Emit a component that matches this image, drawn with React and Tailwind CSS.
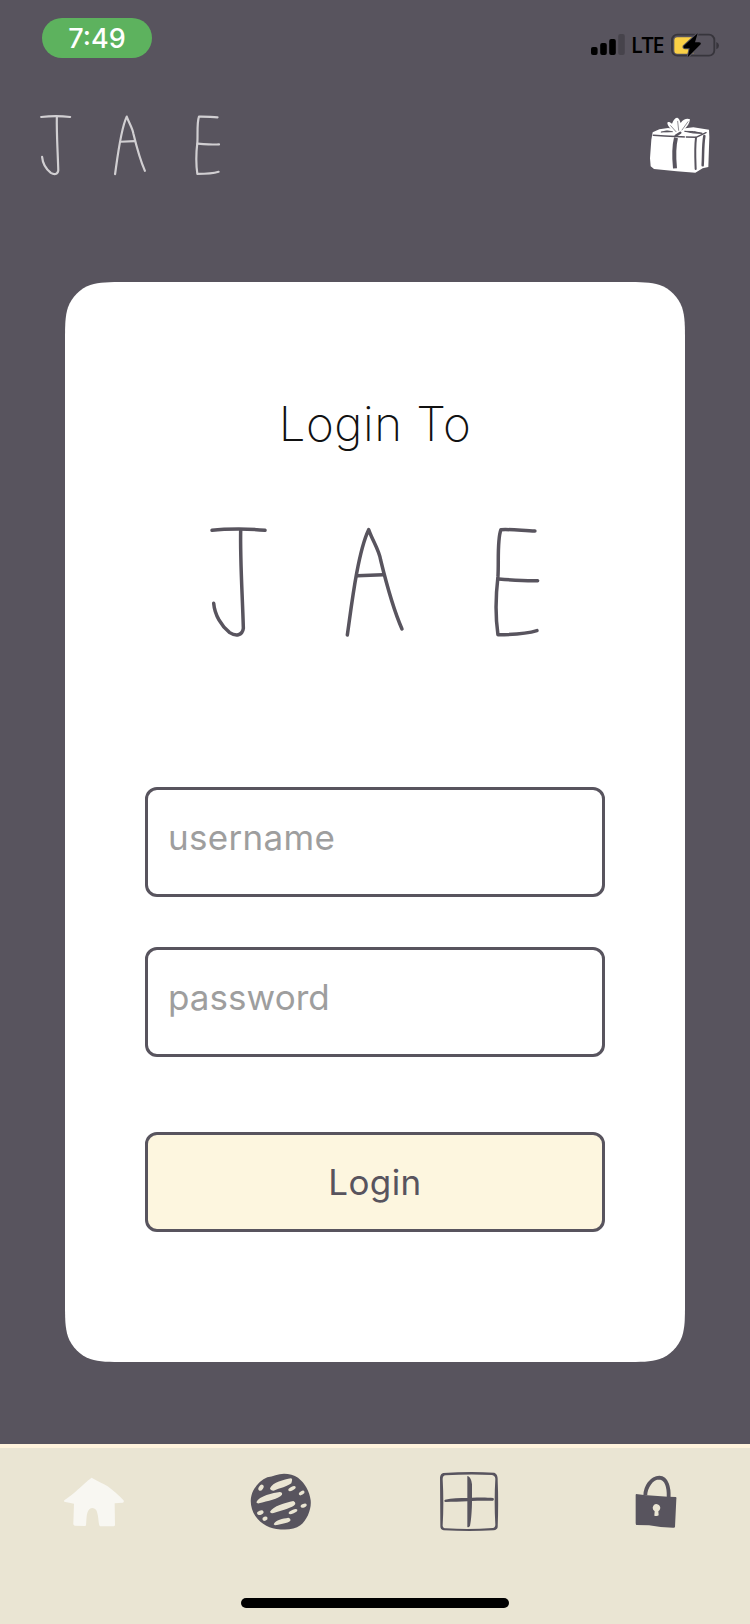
function Wordmark({ className, strokeWidth }) {
  return (
    <svg role="img" aria-label="JAE" viewBox="55 435 1000 340" className={className} fill="none" stroke="currentColor" strokeWidth={strokeWidth} strokeLinecap="round" strokeLinejoin="round">
      <path d="M67 451C110 446 185 446 226 451" />
      <path d="M153 449C151 540 158 640 161 745C158 768 138 769 120 758C95 738 75 705 72 670" />
      <path d="M473 765C484 690 503 520 537 449C550 485 568 510 573 540C590 610 612 690 637 747" />
      <path d="M503 587L580 584" />
      <path d="M1036 453C1005 453 970 447 934 449C922 480 928 550 925 590C918 650 917 710 925 764C965 764 1010 762 1042 752" />
      <path d="M927 597C965 600 1005 603 1044 602" />
    </svg>
  );
}

function Cellular() {
  return (
    <svg viewBox="0 0 34 22" className="h-[22px] w-[34px]">
      <rect x="0" y="13" width="6.6" height="8" rx="2" />
      <rect x="9.2" y="9" width="6.6" height="12" rx="2" />
      <rect x="18.2" y="5" width="6.6" height="16" rx="2" />
      <rect x="27.2" y="0" width="6.6" height="21" rx="2" fillOpacity="0.2" />
    </svg>
  );
}

function Battery() {
  return (
    <svg viewBox="330 94 150 78" className="h-[26px] w-[50px]">
      <rect x="336" y="102" width="127" height="63" rx="16" fill="none" stroke="#37353c" strokeWidth="5.5" />
      <path d="M469 124Q477 127 477 134.500Q477 142 469 146Z" fill="#37353c" />
      <path d="M352 110H400V159H352Q343 159 343 150V119Q343 110 352 110Z" fill="#fad046" />
      <path d="M413 98L371 136Q369 143 376 143H389L383 170L422 131Q424 125 417 125H405Z" fill="#000" stroke="#58545e" strokeWidth="6" paintOrder="stroke" />
    </svg>
  );
}

function Gift() {
  return (
    <svg viewBox="0 0 240 240" className="size-20" fill="none" stroke="#58545e" strokeLinecap="round" strokeLinejoin="round">
      <path d="M38 82L58 73L84 69L112 73L160 67L207 74L208 96L205 186L188 190L166 203L110 199L42 192L32 184L30 160L34 104Z" fill="#fff" stroke="none" />
      <path d="M101 83C94 72 84 66 82 55C82 50 88 49 96 56C101 43 106 38 112 38C119 41 119 47 122 54C130 42 142 39 150 43C149 55 142 65 133 73L122 84Z" fill="#fff" stroke="none" />
      <path d="M40 91C85 94 125 96 168 97L198 83" strokeWidth="4.500" />
      <path d="M168 98C164 130 166 165 167 192" strokeWidth="6" />
      <path d="M108 98C101 126 102 160 105 190" strokeWidth="12" strokeLinecap="butt" />
      <path d="M193 93C188 124 190 151 188 181" strokeWidth="7.500" />
      <path d="M64 81Q80 74 98 80Q80 82 64 81Z" fill="#58545e" strokeWidth="2" />
      <path d="M107 92L121 83" strokeWidth="7" />
      <path d="M135 79Q160 77 187 85Q158 86 135 79Z" fill="#58545e" strokeWidth="3" />
      <path d="M92 62L108 80M113 49L116 76M144 50L126 75" strokeWidth="2" />
      <path d="M136 92V101" stroke="#fff" strokeWidth="3" />
    </svg>
  );
}

function HomeIcon() {
  return (
    <svg viewBox="162 120 240 240" className="size-20" fill="#f8f7f2">
      <path d="M275 173C290 183 310 190 323 199C340 212 355 225 370 240Q374 247 368 248L344 250L345 316Q344 319 340 319H300Q298 318 297 312C295 297 294 279 288 269Q278 260 268 268C258 278 260 300 258 316Q257 319 253 318L224 317Q219 315 220 309L222 251L193 245Q190 243 194 240C208 230 222 220 232 210C246 199 260 183 275 173Z" />
    </svg>
  );
}

function GlobeIcon() {
  return (
    <svg viewBox="724 120 240 240" className="size-20" fill="#58545e">
      <path d="M853 161C868 161 884 165 895 173C916 189 930 214 933 241C936 267 922 301 902 316C884 330 858 330 830 327C804 323 781 309 767 288C756 273 750 248 755 228C761 202 781 182 803 172C820 169 835 161 853 161Z" />
      <g fill="#eae5d3">
        <path d="M811 205C819 187 853 179 874 175Q879 176 877 182L875 190C864 199 840 205 822 212Q812 212 811 205Z" />
        <path d="M770 247C778 227 821 219 840 216Q849 217 847 224C837 237 804 242 778 250Q772 251 770 247Z" />
        <path d="M811 275C821 258 855 249 881 243Q888 246 887 252C880 264 846 270 822 279Q813 281 811 275Z" />
        <path d="M822 313C828 299 849 296 866 293Q874 296 872 302C864 310 842 312 826 316Z" />
        <ellipse cx="784" cy="203" rx="10" ry="6.500" transform="rotate(-55 784 203)" />
        <ellipse cx="877" cy="206" rx="12" ry="5.500" transform="rotate(-27 877 206)" />
        <ellipse cx="906" cy="219" rx="9.500" ry="5.500" transform="rotate(-30 906 219)" />
        <ellipse cx="912" cy="257" rx="9.500" ry="5.500" transform="rotate(-20 912 257)" />
        <ellipse cx="880" cy="275" rx="14" ry="5.500" transform="rotate(-23 880 275)" />
        <ellipse cx="782" cy="278" rx="10" ry="6.500" transform="rotate(-20 782 278)" />
        <ellipse cx="796" cy="296" rx="8" ry="6" transform="rotate(-25 796 296)" />
      </g>
    </svg>
  );
}

function AddIcon() {
  return (
    <svg viewBox="162 120 240 240" className="size-20" fill="#58545e">
      <path fillRule="evenodd" d="M205 159Q285 153 358 158Q369 163 368 180Q371 250 368 322Q366 330 356 331Q285 335 206 331Q196 329 196 319L195 172Q197 160 205 159ZM212 166Q203 167 203 177Q207 250 203 317Q204 325 213 325Q285 329 353 324Q361 323 361 314Q357 245 361 176Q360 167 351 165Q285 161 212 166Z" />
      <path d="M277 168C284 169 290 179 291 193V233C315 232 338 232 355 234Q359 239 354 242C333 243 312 242 291 243C291 266 289 302 285 317Q281 324 277 321V244C255 245 234 246 211 246Q205 244 210 239C230 235 254 234 277 234Z" />
    </svg>
  );
}

function LockIcon() {
  return (
    <svg viewBox="724 120 240 240" className="size-20" fill="#58545e">
      <path d="M812 226C812 202 830 173 854 173C877 174 883 204 882 231" fill="none" stroke="#58545e" strokeWidth="11.5" />
      <path d="M784 222L808 225L880 230L904 231Q906 233 905 237L901 321Q900 324 895 323L858 321L823 316L785 315Q783 313 783 309V225Z" />
      <path d="M845 252Q856 254 857 264Q856 271 851 274L852 286Q848 289 839 287L840 274Q834 269 834 263Q836 253 845 252Z" fill="#eae5d3" />
    </svg>
  );
}

function Field({ type, label, tracking }) {
  return (
    <input
      type={type}
      placeholder={label}
      aria-label={label}
      className={`h-[110px] w-[460px] rounded-xl border-3 border-[#58545e] bg-transparent pt-0 pr-5 pb-[11px] pl-[20px] text-[35px] font-[380] text-[#58545e] outline-none placeholder:text-[#9e9e9e] ${tracking}`}
    />
  );
}

const tabs = [
  { name: "Home", Icon: HomeIcon },
  { name: "Explore", Icon: GlobeIcon },
  { name: "Add", Icon: AddIcon },
  { name: "Account", Icon: LockIcon },
];

export default function App() {
  return (
    <div className="flex h-[1624px] w-[750px] flex-col overflow-hidden bg-[#58545e] font-['Inter',sans-serif]">
      <div className="flex h-[88px] shrink-0 items-start justify-between pt-[18px] pr-[30px] pl-[42px]">
        <div className="flex h-10 w-[110px] items-center justify-center rounded-[20px] bg-[#5db25e] pt-[2px] text-[27px] font-[460] text-white">7:49</div>
        <div className="flex items-center pt-[14px]">
          <Cellular />
          <span className="ml-[6px] w-[39px] font-['Open_Sans',sans-serif] text-[21.5px] leading-[26px] font-semibold tracking-[-1.2px] text-black">LTE</span>
          <Battery />
        </div>
      </div>
      <header className="flex h-[194px] shrink-0 items-start justify-between pt-[17px] pr-[30px] pl-[39px]">
        <Wordmark className="mt-[9px] h-[62px] w-[182px] text-[#d1cfd2]" strokeWidth={12} />
        <Gift />
      </header>
      <main className="mx-[65px] flex h-[1080px] shrink-0 flex-col items-center bg-white [clip-path:path('M61,0C43.5,0,34.7,0,25.3,3C14.9,6.8,6.8,14.9,3,25.3C0,34.7,0,43.5,0,61V1019C0,1036.5,0,1045.3,3,1054.7C6.8,1065.1,14.9,1073.2,25.3,1077C34.7,1080,43.5,1080,61,1080H559C576.5,1080,585.3,1080,594.7,1077C605.1,1073.2,613.2,1065.1,617,1054.7C620,1045.3,620,1036.5,620,1019V61C620,43.5,620,34.7,617,25.3C613.2,14.9,605.1,6.8,594.7,3C585.3,0,576.5,0,559,0Z')]">
        <h1 className="mt-[112px] h-[60px] text-[47.5px] leading-[60px] font-[150] tracking-[0.5px] whitespace-nowrap text-[#111]">Login To</h1>
        <Wordmark className="mt-[71px] h-[113.300px] w-[333.300px] text-[#58545e]" strokeWidth={10.5} />
        <form className="mt-[149px] flex flex-col" onSubmit={(e) => e.preventDefault()}>
          <Field type="text" label="username" tracking="tracking-[0.3px]" />
          <div className="mt-[50px] flex">
            <Field type="password" label="password" tracking="tracking-[0.05px]" />
          </div>
          <button type="submit" className="mt-[75px] h-[100px] w-[460px] rounded-xl border-3 border-[#58545e] bg-[#fdf6df] text-[35px] font-[390] tracking-[0.4px] text-[#58545e]">Login</button>
        </form>
      </main>
      <nav className="mt-[82px] flex h-[180px] shrink-0 flex-col items-center border-t-4 border-[#fff3dc] bg-[#eae5d3]">
        <div className="grid w-full grid-cols-4 pt-3">
          {tabs.map(({ name, Icon }) => (
            <button key={name} type="button" aria-label={name} className="flex justify-center">
              <Icon />
            </button>
          ))}
        </div>
        <div className="mt-[58px] h-[10px] w-[268px] rounded-full bg-black" />
      </nav>
    </div>
  );
}
